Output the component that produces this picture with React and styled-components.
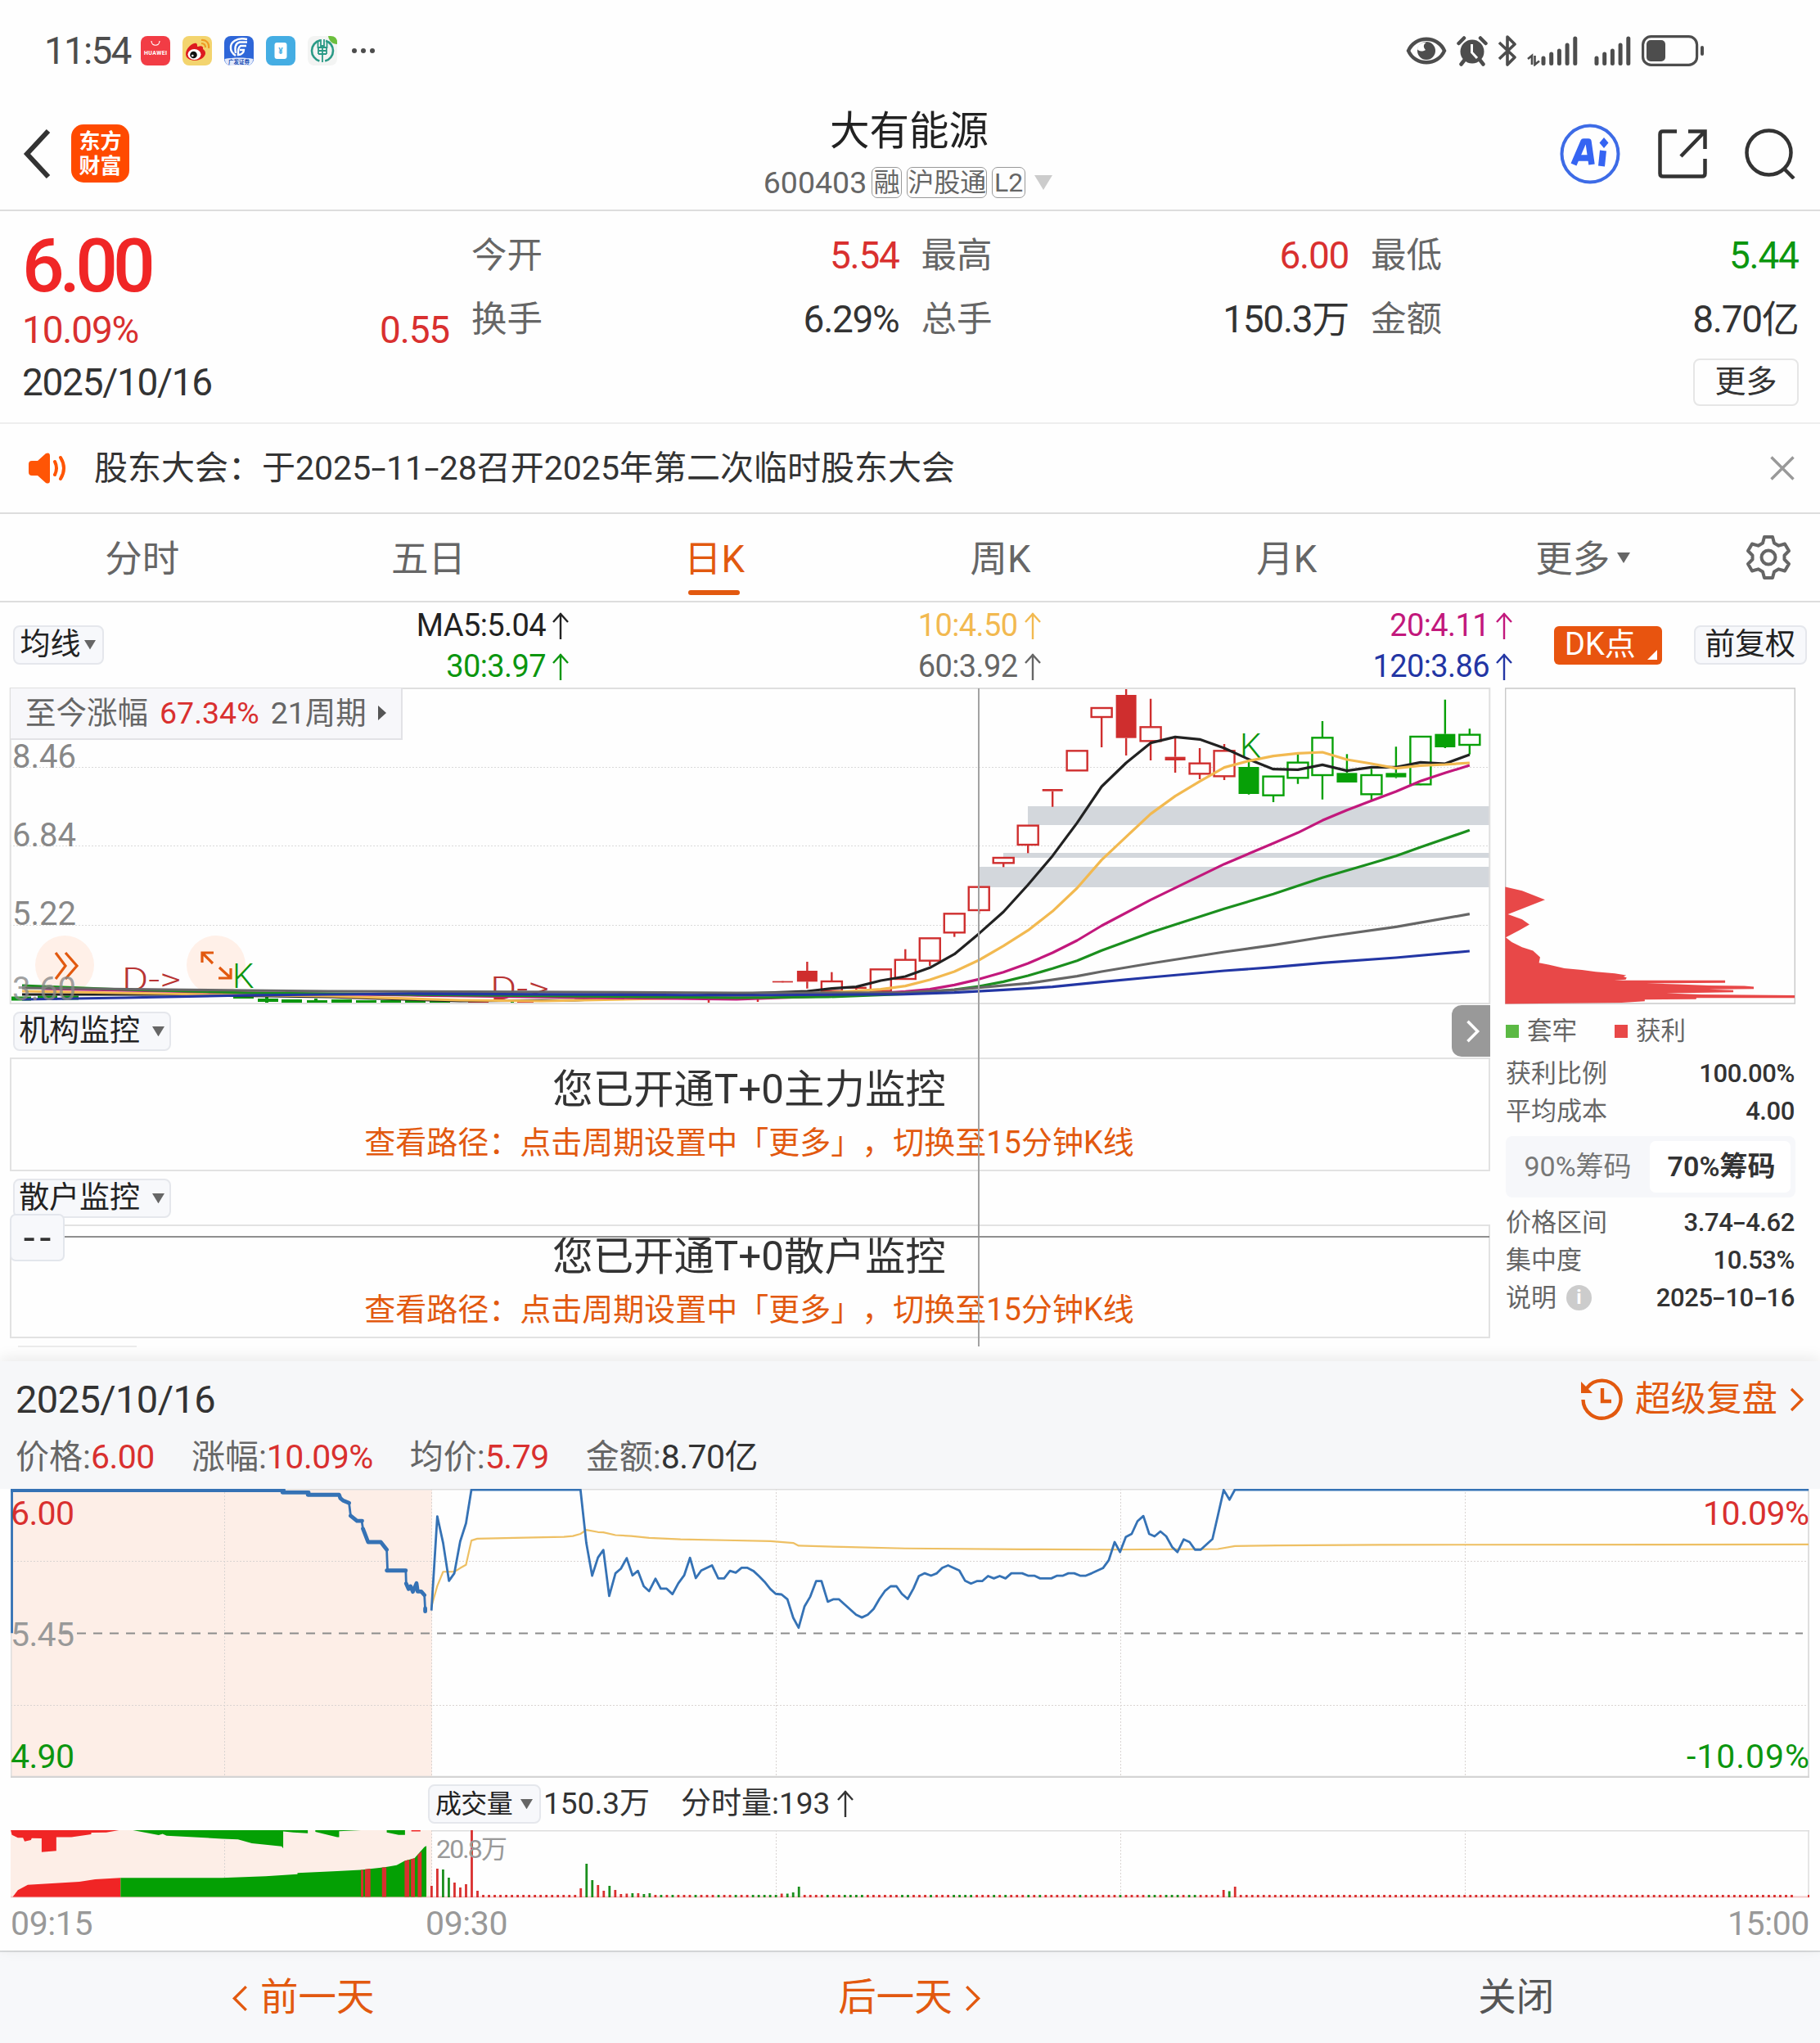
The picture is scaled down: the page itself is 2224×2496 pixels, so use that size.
import React from 'react'
import styled, { createGlobalStyle } from 'styled-components'

const RED = '#d9302f'
const GREEN = '#0c960f'
const ORANGE = '#e2590f'
const BLUE = '#3572b5'

const MA_CELLS = [
    [{ text: 'MA5:5.04', color: '#222222' }, { text: '30:3.97', color: GREEN }],
    [{ text: '10:4.50', color: '#f2b950' }, { text: '60:3.92', color: '#666666' }],
    [{ text: '20:4.11', color: '#c2187c' }, { text: '120:3.86', color: '#2336a4' }],
]

// [color, filled, high, top, bottom, low], in thirds of a pixel
const CANDLES = [
    ['r', 1, 1138, 1136, 1141, 1138],
    ['r', 1, 1065, 1098, 1138, 1163],
    ['r', 0, 1103, 1137, 1172, 1172],
    ['r', 1, 1157, 1157, 1164, 1175],
    ['r', 0, 1093, 1093, 1172, 1172],
    ['r', 0, 1019, 1058, 1128, 1128],
    ['r', 0, 979, 979, 1061, 1080],
    ['r', 0, 889, 889, 958, 974],
    ['r', 0, 791, 791, 876, 890],
    ['r', 0, 684, 684, 703, 718],
    ['r', 0, 566, 566, 636, 667],
    ['r', 1, 436, 432, 440, 497],
    ['r', 0, 292, 292, 364, 364],
    ['r', 0, 135, 135, 168, 279],
    ['r', 1, 63, 87, 245, 309],
    ['r', 0, 101, 205, 256, 327],
    ['r', 1, 243, 314, 327, 372],
    ['r', 0, 282, 338, 376, 396],
    ['r', 0, 267, 292, 385, 399],
    ['g', 1, 330, 351, 450, 452],
    ['g', 0, 386, 386, 455, 480],
    ['g', 0, 305, 335, 391, 413],
    ['g', 0, 183, 244, 381, 470],
    ['g', 1, 304, 373, 408, 408],
    ['g', 0, 358, 381, 451, 475],
    ['g', 1, 277, 373, 389, 392],
    ['g', 0, 238, 240, 415, 418],
    ['g', 1, 104, 230, 279, 282],
    ['g', 0, 211, 233, 270, 305],
]

const candleX = (i) => 944.4 + i * 29.98
const candleY = (v) => (v - 60) / 3

// head: flat stretch in plot pixels; tail: [candle index, value]
const AVERAGES = [
    {
        color: '#222222',
        head: '15,375 190,375 390,378 550,383 690,382 840,376',
        tail: [[1, 1173], [2, 1163], [3, 1157], [4, 1134], [5, 1119], [6, 1087], [7, 1037], [8, 962], [9, 882], [10, 783], [11, 677], [12, 556], [13, 423], [14, 336], [15, 263], [16, 241], [17, 250], [18, 282], [19, 323], [20, 359], [21, 361], [22, 343], [23, 365], [24, 352], [25, 352], [26, 334], [27, 339], [28, 306]],
    },
    {
        color: '#f2b950',
        head: '15,371 190,374 390,377 550,382 650,383 800,380 960,375',
        tail: [[3, 1172], [4, 1166], [5, 1154], [6, 1131], [7, 1101], [8, 1059], [9, 1007], [10, 950], [11, 880], [12, 795], [13, 692], [14, 607], [15, 523], [16, 458], [17, 404], [18, 353], [19, 329], [20, 311], [21, 301], [22, 297], [23, 324], [24, 339], [25, 356], [26, 346], [27, 342], [28, 336]],
    },
    {
        color: '#c2187c',
        head: '40,368 240,372 490,376 888,381 1020,376',
        tail: [[5, 1174], [6, 1166], [7, 1150], [8, 1129], [9, 1103], [10, 1071], [11, 1032], [12, 987], [13, 933], [15, 838], [18, 707], [20, 631], [21, 592], [22, 547], [23, 509], [24, 475], [25, 441], [26, 403], [27, 373], [28, 345]],
    },
    {
        color: '#1b8f1e',
        head: '15,364 140,369 290,373 888,379 1000,378',
        tail: [[5, 1183], [7, 1167], [8, 1155], [9, 1138], [10, 1116], [11, 1090], [12, 1061], [13, 1024], [15, 958], [18, 871], [20, 817], [22, 757], [24, 704], [25, 677], [26, 645], [28, 583]],
    },
    {
        color: '#666666',
        head: '15,367 190,369 390,371 888,373',
        tail: [[5, 1178], [7, 1168], [8, 1160], [10, 1144], [12, 1118], [13, 1101], [15, 1071], [18, 1029], [20, 1004], [22, 975], [25, 937], [28, 890]],
    },
    {
        color: '#2336a4',
        head: '15,381 140,379 290,376 490,374 888,376',
        tail: [[5, 1184], [7, 1178], [9, 1168], [11, 1157], [13, 1139], [15, 1122], [18, 1098], [20, 1085], [22, 1069], [25, 1050], [28, 1026]],
    },
]

const CHIPS = '238,504 300,513 384,534 300,555 248,568 300,580 327,592 290,605 240,622 262,633 300,645 340,653 366,668 362,681 400,686 455,694 520,698 570,702 640,706 682,710 672,713 684,716 680,720 638,722 1045,722 1045,728 755,729 870,731 985,734 1115,735 1150,737 1150,742 985,743 1075,745 1075,750 828,752 960,755 1300,757 1300,763 940,763 938,766 750,767 750,771 665,774 366,776 238,777'

const AUCTION = '30,528 30,56 715,56 715,63 778,63 778,71 855,71 858,82 865,90 880,98 884,140 900,157 912,157 915,183 921,203 928,227 960,227 975,252 977,321 1023,321 1024,364 1030,382 1035,373 1041,391 1050,363 1053,390 1062,390 1070,402 1072,450'
const AUCTION_BOLD = 'M27 56H715M712 63H778M776 71H855L858 82L865 90L880 98M884 140L900 157H913M915 183L921 203L928 227H960L975 252M975 321H1023M1024 364L1030 382L1035 373L1041 391L1050 363L1053 390H1062L1070 402M1072 446V456'

const PRICE = '-315,453 -302,142 -289,230 -276,355 -264,330 -251,225 -238,165 -226,54 17,54 30,230 43,338 56,278 68,253 81,405 95,330 107,315 120,280 133,337 145,322 158,373 170,389 184,348 196,381 209,381 222,399 235,363 248,337 261,279 274,346 286,321 310,304 324,347 337,347 350,322 363,328 376,312 389,312 402,322 415,340 427,358 440,382 452,398 465,400 478,416 491,477 503,510 516,440 529,407 542,356 554,356 568,424 580,416 593,416 631,467 644,476 657,467 670,448 683,415 695,389 708,373 721,373 733,398 746,415 759,380 771,339 784,330 798,338 811,330 823,312 836,304 861,321 874,355 887,364 900,356 912,356 925,339 938,347 951,339 964,347 977,330 1001,330 1014,338 1028,338 1041,347 1066,347 1079,338 1092,338 1104,330 1117,330 1130,338 1143,338 1156,330 1181,313 1194,287 1207,227 1219,260 1232,210 1245,200 1258,158 1271,141 1284,200 1296,208 1309,192 1322,208 1335,243 1347,260 1361,218 1374,227 1386,252 1399,252 1425,217 1437,140 1450,55 1463,87 1475,54 2753,54'
const AVG_PRICE = '-315,440 -302,372 -289,325 -264,325 -251,313 -238,302 -226,222 -213,216 -130,213 -20,210 0,207 17,200 30,187 56,194 68,195 95,204 130,207 170,213 240,218 340,221 440,224 491,230 503,239 600,243 740,248 1000,251 1190,252 1437,250 1475,240 1568,238 1800,236 2753,235'

const BAR_HEIGHTS = {
    0: 14, 1: 35, 2: 34, 3: 24, 4: 18, 5: 12, 6: 16, 7: 82, 8: 8, 26: 11, 27: 41, 28: 21, 29: 15, 30: 8, 31: 14, 32: 9,
    33: 4, 34: 4.5, 35: 5, 36: 5, 37: 4, 38: 5, 61: 4.5, 62: 4.5, 63: 6, 64: 13, 138: 9, 139: 7.5, 140: 13,
}
const GREEN_BARS = [2, 3, 27, 28, 31, 35, 37, 38, 40, 42, 46, 50, 53, 56, 57, 58, 59, 60, 62, 63, 64, 69, 72, 73, 74, 75, 82, 83, 87, 91, 92, 93, 94, 98, 100, 104, 106, 113, 120, 125, 126, 128, 129, 130, 132, 133, 139]
const BARS = Array.from({ length: 241 }, (_, i) => i).filter((i) => i < 238 || i === 240)

const UpArrow = () => (
    <svg width="20" height="33" viewBox="0 0 20 33" fill="none" stroke="currentColor" strokeWidth="2.4">
        <path d="M10 33V1M1 12L10 2L19 12" />
    </svg>
)

const Caret = ({ size = 14 }) => (
    <svg width={size} height={size * 0.82} viewBox="0 0 14 12" preserveAspectRatio="none">
        <path d="M0 0H14L7 12Z" fill="currentColor" />
    </svg>
)

const Chevron = ({ left, width = 18, height = 30, stroke = 3.6 }) => (
    <svg width={width} height={height} viewBox="0 0 18 30" fill="none" stroke="currentColor" strokeWidth={stroke}>
        <path d={left ? 'M16 2L3 15L16 28' : 'M2 2L15 15L2 28'} />
    </svg>
)

const StatusApps = () => (
    <AppIcons>
        <svg width="36" height="36" viewBox="0 0 36 36">
            <rect width="36" height="36" rx="8" fill="#f23c45" />
            <path d="M13 6C13 13 23 13 23 6" fill="none" stroke="#fff" strokeWidth="1.2" />
            <text x="18" y="23" fontSize="7" fontWeight="700" fill="#fff" textAnchor="middle" textLength="28">HUAWEI</text>
        </svg>
        <svg width="36" height="36" viewBox="0 0 36 36">
            <rect width="36" height="36" rx="8" fill="#f3d46e" />
            <path d="M4 22C4 14 14 7 17 9C19 11 17 13 19 13C23 11 26 13 25 16C28 18 29 21 27 24C23 32 4 32 4 22Z" fill="#dd1b1f" />
            <ellipse cx="14.500" cy="22.500" rx="8" ry="6.500" fill="#fff" />
            <circle cx="13.500" cy="23" r="4.300" fill="#111" />
            <circle cx="12.300" cy="24" r="1.300" fill="#fff" />
            <path d="M23 5C29 4 33 9 32 15M23 9C26.500 9 28 11 28 14" fill="none" stroke="#ee9a23" strokeWidth="2.200" />
        </svg>
        <svg width="36" height="36" viewBox="0 0 36 36">
            <rect width="36" height="36" rx="8" fill="#2e66d8" />
            <path d="M0.500 28C10 26 26 26 35.500 28Q34.500 36 28 36H8Q1.500 36 0.500 28Z" fill="#e3eafb" />
            <path d="M28 4C15 1 7 8 8 15C8 19 11 22 14 24M28 7.500H19C13 9 13 16 14 21M27 12H20C17 14 17 17 17 23C21 23 24 20 24 17H19" fill="none" stroke="#fff" strokeWidth="2.400" />
            <text x="18" y="34" fontSize="6.500" fontWeight="700" fill="#2450b4" textAnchor="middle">广发证券</text>
        </svg>
        <svg width="36" height="36" viewBox="0 0 36 36">
            <rect width="36" height="36" rx="8" fill="#44ade3" />
            <rect x="10.500" y="8" width="15" height="20" rx="3" fill="#fff" />
            <text x="18" y="22" fontSize="10" fontWeight="700" fill="#44ade3" textAnchor="middle">¥</text>
        </svg>
        <svg width="36" height="36" viewBox="0 0 36 36">
            <rect width="36" height="36" rx="8" fill="#f3f4f3" />
            <path d="M25 0H28Q36 0 36 8V10C30 10 26 6 25 0Z" fill="#6cbf3d" />
            <circle cx="18" cy="18" r="13" fill="none" stroke="#2a9a86" strokeWidth="2.600" strokeDasharray="34 7" strokeDashoffset="17" />
            <path d="M18 14V32M16 4V12H20V4M12.500 7V14H23.500V7M13 18H23M13 22H23M13 14V22M23 14V22" fill="none" stroke="#2a9a86" strokeWidth="1.800" />
        </svg>
        <svg width="30" height="8" viewBox="0 0 30 8" fill="#4d4d4d">
            <circle cx="4" cy="4" r="3" />
            <circle cx="15" cy="4" r="3" />
            <circle cx="26" cy="4" r="3" />
        </svg>
    </AppIcons>
)

const Signal = () => (
    <svg width="46" height="38" viewBox="0 0 46 38" stroke="#4d4d4d" strokeWidth="5" strokeLinecap="round">
        <path d="M3 28V34.500M12.700 23V34.500M22.400 19V34.500M32.100 12V34.500M41.800 4V34.500" />
    </svg>
)

const StatusIcons = () => (
    <SystemIcons>
        <svg width="50" height="36" viewBox="0 0 50 36">
            <path d="M3 18C11 -1 39 -1 47 18C39 37 11 37 3 18Z" fill="none" stroke="#4d4d4d" strokeWidth="4.500" />
            <circle cx="25" cy="18" r="11" fill="#4d4d4d" />
            <path d="M25 8C21 10 21 14 24 17C19 20 15 18 14 16C15 10 20 7 25 8Z" fill="#fff" />
        </svg>
        <svg width="38" height="38" viewBox="0 0 38 38">
            <circle cx="19" cy="20" r="14.500" fill="#4d4d4d" />
            <path d="M2.500 10L9 3.500M35.500 10L29 3.500M9 31L5.500 35.500M29 31L32.500 35.500" stroke="#4d4d4d" strokeWidth="4.500" strokeLinecap="round" />
            <path d="M18.500 11V21L25 28" fill="none" stroke="#fff" strokeWidth="3" />
        </svg>
        <svg width="24" height="38" viewBox="0 0 24 38">
            <path d="M2 9L21 27L12 36V2L21 11L2 29" fill="none" stroke="#4d4d4d" strokeWidth="3.600" strokeLinejoin="round" />
        </svg>
        <SignalGroup>
            <svg width="17" height="38" viewBox="0 0 17 38">
                <path d="M1 29L6 25V36M9.500 25V36L15 31.500" fill="none" stroke="#4d4d4d" strokeWidth="2.600" />
            </svg>
            <Signal />
        </SignalGroup>
        <Signal />
        <svg width="76" height="38" viewBox="0 0 76 38">
            <rect x="1.600" y="1.600" width="66" height="34.800" rx="10" fill="none" stroke="#4d4d4d" strokeWidth="3.200" />
            <rect x="6" y="6" width="23" height="26" rx="5" fill="#4d4d4d" />
            <rect x="72" y="13" width="4" height="12" rx="2" fill="#4d4d4d" />
        </svg>
    </SystemIcons>
)

const KLine = () => (
    <KLineSvg width="1809" height="387" viewBox="0 0 1809 387">
        <g stroke="#d9d9d9" strokeDasharray="2 2">
            <path d="M0 97.500H1808M0 193.500H1808M0 290.500H1808" />
        </g>
        <g fill="#d3d7dc">
            <rect x="1244" y="145" width="564" height="23" />
            <rect x="1214" y="202" width="594" height="6" />
            <rect x="1184" y="219" width="624" height="25" />
        </g>
        <circle cx="67" cy="339" r="36" fill="#fff0e8" />
        <circle cx="252" cy="339" r="36" fill="#fff0e8" />
        <path d="M56 324L68 340L56 356M68 324L82 340L68 356" fill="none" stroke={ORANGE} strokeWidth="3.200" />
        <path d="M235 336V324H249M236 325L248 337M270 343V355H255M269 354L256 342" fill="none" stroke={ORANGE} strokeWidth="3.200" />
        <g fontSize="42" fontWeight="300">
            <text x="137" y="370" fontSize="38" fill="#b83434" textLength="72" lengthAdjust="spacingAndGlyphs">D-&gt;</text>
            <text x="587" y="381" fontSize="38" fill="#b83434" textLength="72" lengthAdjust="spacingAndGlyphs">D-&gt;</text>
            <text x="272" y="367" fill={GREEN}>K</text>
            <text x="1503" y="86" fill={GREEN}>K</text>
        </g>
        <path d="M2 380H26M34 379H58M64 379H84" stroke="#0c960f" strokeWidth="5" />
        <path d="M273 378H298M303 382H328M332 383H357M363 384H388M393 383H418M423 384H448M453 384H478M483 384H508M513 384H538M314 378V386M374 380V386M614 382V386" stroke="#0c960f" strokeWidth="4" />
        <path d="M560 384H585M620 384H640M854 378V387M914 378V384" stroke={RED} strokeWidth="2.500" />
        {CANDLES.map(([tone, filled, high, top, bottom, low], i) => {
            const color = tone === 'r' ? '#cf2e2e' : '#07a007'
            const x = candleX(i)
            return (
                <g key={i} stroke={color} strokeWidth="2.400">
                    <path d={`M${x} ${candleY(high)}V${candleY(top)}M${x} ${candleY(bottom)}V${candleY(low)}`} />
                    {filled
                        ? <rect x={x - 12.5} y={candleY(top)} width="25" height={(bottom - top) / 3} fill={color} stroke="none" />
                        : <rect x={x - 12.5} y={candleY(top)} width="25" height={(bottom - top) / 3} fill="#fff" />}
                </g>
            )
        })}
        {AVERAGES.map(({ color, head, tail }) => (
            <polyline
                key={color}
                points={`${head} ${tail.map(([i, v]) => `${candleX(i)},${candleY(v)}`).join(' ')}`}
                fill="none"
                stroke={color}
                strokeWidth="3.200"
                strokeLinejoin="round"
            />
        ))}
        <g fontSize="40" fill="#888888">
            <text x="3" y="98">8.46</text>
            <text x="3" y="194">6.84</text>
            <text x="3" y="290">5.22</text>
            <text x="3" y="382" fillOpacity="0.8">3.60</text>
        </g>
        <rect x="0.750" y="1" width="1807.500" height="385" fill="none" stroke="#dfdfdf" strokeWidth="2" />
    </KLineSvg>
)

const MinuteChart = () => (
    <svg width="2198" height="353" viewBox="0 0 2198 353">
        <rect width="515" height="352" fill="#fdeee7" />
        <g stroke="#d9d4d2" strokeDasharray="2 2">
            <path d="M0 88.500H2197M0 264.500H2197M261.500 0V352M514.500 0V352M935.500 0V352M1356.500 0V352M1777.500 0V352" />
        </g>
        <path d="M60 176.500H2190" stroke="#8c8c8c" strokeWidth="2" strokeDasharray="11 9" strokeDashoffset="-1" />
        <path d="M0.500 0V352M0 0.500H2198M2197 0V352" stroke="#dedede" strokeWidth="2" />
        <path d="M0 352H2198" stroke="#d4d4d4" strokeWidth="2.500" />
        <g fill="none" stroke={BLUE} strokeLinejoin="round" transform="translate(-13 -19) scale(0.4847 0.37)">
            <polyline points={AUCTION} strokeWidth="2.800" vectorEffect="non-scaling-stroke" />
            <path d={AUCTION_BOLD} strokeWidth="4.800" strokeLinecap="round" vectorEffect="non-scaling-stroke" />
        </g>
        <g fill="none" strokeLinejoin="round" transform="translate(687 -19) scale(0.5485 0.37)">
            <polyline points={AVG_PRICE} stroke="#eec064" strokeWidth="2.200" vectorEffect="non-scaling-stroke" />
            <polyline points={PRICE} stroke={BLUE} strokeWidth="2.800" vectorEffect="non-scaling-stroke" />
        </g>
        <g fontSize="41">
            <text x="0" y="44" fill={RED} textLength="78">6.00</text>
            <text x="0" y="192" fill="#999999" textLength="78">5.45</text>
            <text x="0" y="341" fill={GREEN} textLength="78">4.90</text>
            <text x="2198" y="44" fill={RED} textAnchor="end" textLength="130">10.09%</text>
            <text x="2198" y="341" fill={GREEN} textAnchor="end" textLength="150">-10.09%</text>
        </g>
    </svg>
)

const VolumeChart = () => (
    <svg width="2198" height="83" viewBox="0 0 2198 83">
        <rect width="515" height="82" fill="#fdeee7" />
        <path d="M261.500 0V82M514.500 0V82M935.500 0V82M1356.500 0V82M1777.500 0V82" stroke="#d9d4d2" strokeDasharray="2 2" />
        <path d="M515 0.750H2198M2197 0V82" stroke="#dedede" strokeWidth="1.500" />
        <path d="M0 81.500H2198" stroke="#f3caca" strokeWidth="2" />
        <g transform="translate(-13 -436.500) scale(0.4847 0.37)">
            <path d="M27 1180L30 1195L45 1205H58L62 1217L78 1212L80 1206L105 1207V1252L142 1248V1203H180L230 1193V1188L268 1187L300 1180ZM1037 1180H1060V1184H1037Z" fill="#f02525" />
            <path d="M335 1180L400 1196L410 1192L420 1198L560 1208L600 1210L635 1223L710 1233L714 1240V1184L740 1187L776 1190V1180ZM795 1180V1185L850 1203H855V1183L910 1180ZM975 1180V1187L1005 1195H1021V1180Z" fill="#04a004" />
            <path d="M32 1400L45 1378L70 1360L200 1350L240 1342L304 1337V1400Z" fill="#f02525" />
            <path d="M304 1337H560L670 1332L750 1325V1321L850 1315L910 1311L970 1302L1000 1295L1020 1281L1045 1272L1060 1250L1070 1235L1075 1232V1400H304Z" fill="#04a004" />
            <path d="M910 1400V1311H916V1400ZM920 1400V1309L934 1307V1400ZM963 1400V1303H974V1400ZM1020 1400V1281L1032 1277V1400ZM1036 1400V1275L1046 1272V1400ZM1053 1400V1261L1063 1250V1400Z" fill="#d9302f" />
        </g>
        {BARS.map((i) => {
            const h = BAR_HEIGHTS[i] || 3
            return <rect key={i} x={513 + i * 7.013} y={82 - h} width="2.8" height={h} fill={GREEN_BARS.includes(i) ? '#1b8f1e' : RED} />
        })}
        <text x="520" y="34" fontSize="32" fill="#999999" textLength="87">20.8万</text>
    </svg>
)

const Stat = ({ label, value, tone }) => (
    <StatCell>
        <StatLabel>{label}</StatLabel>
        <StatValue $color={tone}>{value}</StatValue>
    </StatCell>
)

const Monitor = ({ name, title }) => (
    <>
        <MonitorHead>
            <Pill $width={193} $gap={15}>{name}<Caret size={15} /></Pill>
        </MonitorHead>
        <MonitorBox>
            <MonitorTitle>{title}</MonitorTitle>
            <MonitorHint>查看路径：点击周期设置中「更多」，切换至15分钟K线</MonitorHint>
        </MonitorBox>
    </>
)

const App = () => {
    return (
        <Page>
            <GlobalStyle />
            <StatusBar>
                <Clock>11:54</Clock>
                <StatusApps />
                <StatusIcons />
            </StatusBar>

            <Header>
                <HeaderSide>
                    <svg width="34" height="60" viewBox="0 0 34 60" fill="none" stroke="#333" strokeWidth="6">
                        <path d="M31 2L5 30L31 58" />
                    </svg>
                    <Brand><span>东方</span><span>财富</span></Brand>
                </HeaderSide>
                <Heading>
                    <StockName>大有能源</StockName>
                    <StockCode>
                        600403
                        <Tag $width={37}>融</Tag>
                        <Tag $width={98}>沪股通</Tag>
                        <Tag $width={41}>L2</Tag>
                        <CodeCaret><Caret size={22} /></CodeCaret>
                    </StockCode>
                </Heading>
                <HeaderActions>
                    <svg width="74" height="74" viewBox="0 0 74 74">
                        <circle cx="37" cy="37" r="34.500" fill="none" stroke="#3d6be6" strokeWidth="4" />
                        <path d="M17 50L29 22H35L39 50M22 42H37" fill="none" stroke="#3564f2" strokeWidth="7.500" strokeLinejoin="round" />
                        <path d="M53 33L51 52" stroke="#3564f2" strokeWidth="8" />
                        <path d="M54 17L59.500 23.500L54 30L48.500 23.500Z" fill="#3564f2" />
                    </svg>
                    <svg width="60" height="60" viewBox="0 0 60 60" fill="none" stroke="#333" strokeWidth="4.500">
                        <path d="M23 2.500H6Q2.500 2.500 2.500 6V54Q2.500 57.500 6 57.500H54Q57.500 57.500 57.500 54V36M37 2.500H57.500V24M57 3L28 33" />
                    </svg>
                    <svg width="62" height="62" viewBox="0 0 62 62" fill="none" stroke="#333" strokeWidth="4.500">
                        <circle cx="29.500" cy="29.500" r="27" />
                        <path d="M47 48L60 61" />
                    </svg>
                </HeaderActions>
            </Header>

            <Quote>
                <QuoteMain>
                    <LastPrice>6.00</LastPrice>
                    <Change><span>10.09%</span><span>0.55</span></Change>
                </QuoteMain>
                <Stats>
                    <Stat label="今开" value="5.54" tone={RED} />
                    <Stat label="最高" value="6.00" tone={RED} />
                    <Stat label="最低" value="5.44" tone={GREEN} />
                    <Stat label="换手" value="6.29%" />
                    <Stat label="总手" value="150.3万" />
                    <Stat label="金额" value="8.70亿" />
                </Stats>
                <QuoteFoot>
                    <span>2025/10/16</span>
                    <MoreButton>更多</MoreButton>
                </QuoteFoot>
            </Quote>

            <News>
                <svg width="48" height="38" viewBox="0 0 48 38">
                    <path d="M5 10H12L22 1Q27 -1 27 4V34Q27 39 22 37L12 28H5Q1 28 1 24V14Q1 10 5 10Z" fill="#ff5505" />
                    <path d="M33 11Q37 19 33 27M40 6Q48 19 40 32" fill="none" stroke="#ff5505" strokeWidth="4" strokeLinecap="round" />
                </svg>
                <NewsText>股东大会：于2025<Dash>-</Dash>11<Dash>-</Dash>28召开2025年第二次临时股东大会</NewsText>
                <svg width="30" height="30" viewBox="0 0 30 30" stroke="#999" strokeWidth="3.400">
                    <path d="M1.500 1.500L28.500 28.500M28.500 1.500L1.500 28.500" />
                </svg>
            </News>

            <Tabs>
                <Tab>分时</Tab>
                <Tab>五日</Tab>
                <Tab $active>日K</Tab>
                <Tab>周K</Tab>
                <Tab>月K</Tab>
                <Tab>更多<TabCaret><Caret size={16} /></TabCaret></Tab>
                <Settings>
                    <svg width="56" height="56" viewBox="0 0 56 56" fill="none" stroke="#666" strokeWidth="4" strokeLinejoin="round">
                        <path d="M23 3H33L35 10.500L40.500 13.700L48 11.500L53 20L47.500 25.500V30.500L53 36L48 44.500L40.500 42.300L35 45.500L33 53H23L21 45.500L15.500 42.300L8 44.500L3 36L8.500 30.500V25.500L3 20L8 11.500L15.500 13.700L21 10.500Z" />
                        <circle cx="28" cy="28" r="8.500" />
                    </svg>
                </Settings>
            </Tabs>

            <Indicators>
                <Pill $width={111} $gap={5}>均线<Caret size={14} /></Pill>
                <MaGrid>
                    {MA_CELLS.map((cells) => (
                        <MaColumn key={cells[0].text}>
                            {cells.map(({ text, color }) => (
                                <MaValue key={text} $color={color}>{text}<UpArrow /></MaValue>
                            ))}
                        </MaColumn>
                    ))}
                </MaGrid>
                <DkButton>DK点</DkButton>
                <Pill $width={138} $gap={0}>前复权</Pill>
            </Indicators>

            <Charts>
                <ChartColumn>
                    <KLine />
                    <GainTag>
                        至今涨幅 <b>67.34%</b> 21周期
                        <svg width="10" height="18" viewBox="0 0 10 18"><path d="M0 0L10 9L0 18Z" fill="#555" /></svg>
                    </GainTag>
                    <Monitor name="机构监控" title="您已开通T+0主力监控" />
                    <Monitor name="散户监控" title="您已开通T+0散户监控" />
                    <NextPill />
                    <Expand><Chevron width={18} height={28} stroke={3.8} /></Expand>
                    <CrossV />
                    <CrossH />
                    <CrossLabel>--</CrossLabel>
                </ChartColumn>
                <ChipColumn>
                    <svg width="355" height="387" viewBox="237 39 1066 739" preserveAspectRatio="none">
                        <rect x="239" y="41" width="1062" height="735" fill="none" stroke="#c9c9c9" strokeWidth="1.500" vectorEffect="non-scaling-stroke" />
                        <polygon points={CHIPS} fill="#e84848" />
                    </svg>
                    <Legend>
                        <LegendItem $color="#5bb944">套牢</LegendItem>
                        <LegendItem $color="#e84848">获利</LegendItem>
                    </Legend>
                    <ChipRow>获利比例<b>100.00%</b></ChipRow>
                    <ChipRow>平均成本<b>4.00</b></ChipRow>
                    <ChipTabs>
                        <ChipTab>90%筹码</ChipTab>
                        <ChipTab $active>70%筹码</ChipTab>
                    </ChipTabs>
                    <ChipRow>价格区间<b>3.74<Dash>-</Dash>4.62</b></ChipRow>
                    <ChipRow>集中度<b>10.53%</b></ChipRow>
                    <ChipRow>
                        <ChipNote>说明<Info>i</Info></ChipNote>
                        <b>2025<Dash>-</Dash>10<Dash>-</Dash>16</b>
                    </ChipRow>
                </ChipColumn>
            </Charts>

            <Replay>
                <ReplayHead>
                    <ReplayTop>
                        <span>2025/10/16</span>
                        <ReplayLink>
                            <svg width="52" height="52" viewBox="0 0 52 52" fill="none" stroke={ORANGE} strokeWidth="4.400">
                                <path d="M3.500 26A23 23 0 1 0 8 12M27 12V28H38" />
                                <path d="M1 4V18H15L10 13Z" fill={ORANGE} stroke="none" />
                            </svg>
                            超级复盘
                            <Chevron stroke={3.2} />
                        </ReplayLink>
                    </ReplayTop>
                    <ReplayStats>
                        <div>价格:<b>6.00</b></div>
                        <div>涨幅:<b>10.09%</b></div>
                        <div>均价:<b>5.79</b></div>
                        <div>金额:<i>8.70亿</i></div>
                    </ReplayStats>
                </ReplayHead>
                <MinuteChart />
                <VolumeHead>
                    <Pill $width={138} $gap={10} $small>成交量<Caret size={15} /></Pill>
                    <span>150.3万</span>
                    <VolumeNow>分时量:193<UpArrow /></VolumeNow>
                </VolumeHead>
                <VolumeChart />
                <TimeAxis><span>09:15</span><span>09:30</span><span>15:00</span></TimeAxis>
            </Replay>

            <BottomNav>
                <NavItem $accent><Chevron left width={20} height={35} stroke={3} />前一天</NavItem>
                <NavItem $accent>后一天<Chevron width={20} height={35} stroke={3} /></NavItem>
                <NavItem>关闭</NavItem>
            </BottomNav>
        </Page>
    )
}

const GlobalStyle = createGlobalStyle`
    body {
        margin: 0;
        background: #fefefe;
    }
    * {
        box-sizing: border-box;
    }
    b, i {
        font-weight: 400;
        font-style: normal;
    }
    svg {
        display: block;
        flex-shrink: 0;
    }
`

const Page = styled.div`
    width: 2224px;
    height: 2496px;
    display: flex;
    flex-direction: column;
    overflow: hidden;
    background: #fefefe;
    color: #333333;
    font-family: Roboto, "Noto Sans CJK SC", sans-serif;
    line-height: 1.2;
    white-space: nowrap;
    text-spacing-trim: space-all;
`

// Roboto's hyphen is short, stretch it inside dates and ranges
const Dash = styled.span`
    display: inline-block;
    margin: 0 0.09em;
    transform: scaleX(1.6);
`

const StatusBar = styled.div`
    height: 124px;
    padding-left: 54px;
    display: flex;
    align-items: center;
`

const Clock = styled.div`
    width: 118px;
    padding-top: 2px;
    font-size: 46px;
    letter-spacing: -1.8px;
    color: #4d4d4d;
`

const AppIcons = styled.div`
    display: flex;
    align-items: center;
    gap: 15px;
    svg:last-child {
        margin-left: 2px;
    }
`

const SystemIcons = styled.div`
    display: flex;
    align-items: center;
    gap: 12px;
    margin-left: auto;
    padding-right: 142px;
`

const SignalGroup = styled.div`
    display: flex;
    margin-right: 7px;
`

const Header = styled.header`
    height: 134px;
    padding: 0 30px 0 28px;
    display: grid;
    grid-template-columns: 1fr auto 1fr;
    border-bottom: 2px solid #dddddd;
`

const HeaderSide = styled.div`
    display: flex;
    align-items: center;
    gap: 25px;
    padding-bottom: 5px;
`

const Brand = styled.div`
    width: 71px;
    height: 71px;
    border-radius: 15px;
    background: #ff4a00;
    color: #ffffff;
    display: flex;
    flex-direction: column;
    align-items: center;
    justify-content: center;
    font-size: 26px;
    font-weight: 700;
    line-height: 30px;
`

const Heading = styled.div`
    display: flex;
    flex-direction: column;
    align-items: center;
`

const StockName = styled.div`
    margin-top: 5px;
    font-size: 48.5px;
    line-height: 63px;
    color: #222222;
`

const StockCode = styled.div`
    height: 62px;
    display: flex;
    align-items: center;
    gap: 6px;
    padding-right: 3px;
    font-size: 37.5px;
    color: #666666;
`

const Tag = styled.span`
    width: ${(p) => p.$width}px;
    height: 38px;
    display: flex;
    align-items: center;
    justify-content: center;
    border: 1.5px solid #999999;
    border-radius: 7px;
    font-size: 32px;
`

const CodeCaret = styled.span`
    margin-left: 5px;
    color: #cccccc;
`

const HeaderActions = styled.div`
    display: flex;
    align-items: center;
    justify-content: flex-end;
    gap: 46px;
    padding-bottom: 5px;
`

const Quote = styled.section`
    height: 260px;
    padding: 0 26px 0 27px;
    display: grid;
    grid-template-columns: 522px 1fr;
    grid-template-rows: 176px 1fr;
    border-bottom: 2px solid #eeeeee;
`

const QuoteMain = styled.div`
    display: flex;
    flex-direction: column;
    color: ${RED};
`

const LastPrice = styled.div`
    margin-top: 14px;
    font-size: 91px;
    font-weight: 500;
    line-height: 106px;
    letter-spacing: -5.9px;
    color: #f02626;
`

const Change = styled.div`
    display: flex;
    justify-content: space-between;
    font-size: 46px;
    line-height: 50px;
    letter-spacing: -1.2px;
`

const Stats = styled.div`
    display: grid;
    grid-template-columns: repeat(3, 549.5px);
    grid-auto-rows: 78px;
    padding-top: 16px;
`

const StatCell = styled.div`
    display: flex;
    align-items: center;
    justify-content: space-between;
    padding-left: 27px;
`

const StatLabel = styled.span`
    font-size: 43.5px;
    color: #666666;
`

const StatValue = styled.span`
    font-size: 46px;
    letter-spacing: -1.3px;
    color: ${(p) => p.$color || '#333333'};
`

const QuoteFoot = styled.div`
    grid-column: 1 / -1;
    height: 66px;
    display: flex;
    align-items: center;
    justify-content: space-between;
    font-size: 46px;
    letter-spacing: -1.3px;
    > span {
        padding-top: 2px;
    }
`

const MoreButton = styled.div`
    width: 129px;
    height: 58px;
    display: flex;
    align-items: center;
    justify-content: center;
    border: 2px solid #e6e6e6;
    border-radius: 8px;
    font-size: 38px;
    letter-spacing: 0;
`

const News = styled.section`
    height: 110px;
    padding: 0 31px 0 34px;
    display: flex;
    align-items: center;
    border-bottom: 2px solid #dddddd;
`

const NewsText = styled.div`
    flex: 1;
    padding: 2px 0 0 33px;
    font-size: 41px;
`

const Tabs = styled.nav`
    height: 108px;
    display: grid;
    grid-template-columns: repeat(6, 349.6px) 1fr;
    border-bottom: 2px solid #dddddd;
`

const Tab = styled.div`
    position: relative;
    display: flex;
    align-items: center;
    justify-content: center;
    padding: 6px 2px 0 0;
    font-size: 45.5px;
    color: ${(p) => (p.$active ? ORANGE : '#666666')};
    &::after {
        content: '';
        display: ${(p) => (p.$active ? 'block' : 'none')};
        position: absolute;
        bottom: 7px;
        width: 63px;
        height: 6px;
        border-radius: 3px;
        background: ${ORANGE};
    }
`

const TabCaret = styled.span`
    width: 0;
    margin-bottom: 4px;
    svg {
        margin-left: 9px;
    }
`

const Settings = styled.div`
    display: flex;
    align-items: center;
    justify-content: center;
`

const Indicators = styled.section`
    height: 104px;
    padding: 0 16px;
    display: flex;
    align-items: center;
`

const Pill = styled.div`
    width: ${(p) => p.$width}px;
    height: 48px;
    display: flex;
    align-items: center;
    justify-content: center;
    gap: ${(p) => p.$gap}px;
    padding-right: 1px;
    border: 2px solid #e5e7ec;
    border-radius: 8px;
    background: #f7f8fb;
    font-size: ${(p) => (p.$small ? 32 : 37)}px;
    letter-spacing: ${(p) => (p.$small ? -0.7 : -0.1)}px;
    color: #222222;
    svg {
        color: #666666;
    }
`

const MaGrid = styled.div`
    flex: 1;
    display: grid;
    grid-template-columns: 568px 576.5px 576.5px;
    align-self: stretch;
    padding-top: 4px;
`

const MaColumn = styled.div`
    display: flex;
    flex-direction: column;
    align-items: flex-end;
`

const MaValue = styled.div`
    height: 50px;
    display: flex;
    align-items: center;
    gap: 8px;
    font-size: 38px;
    letter-spacing: -0.6px;
    color: ${(p) => p.$color};
    svg {
        margin-bottom: 2px;
    }
`

const DkButton = styled.div`
    position: relative;
    width: 132px;
    height: 47px;
    margin-right: 39px;
    padding-left: 13px;
    display: flex;
    align-items: center;
    border-radius: 6px;
    background: #e8540f;
    font-size: 38px;
    color: #ffffff;
    &::after {
        content: '';
        position: absolute;
        right: 6px;
        bottom: 6px;
        border-left: 12px solid transparent;
        border-bottom: 12px solid #ffffff;
    }
`

const Charts = styled.section`
    height: 823px;
    padding: 0 30px 0 12px;
    display: flex;
    justify-content: space-between;
`

const ChartColumn = styled.div`
    position: relative;
    width: 1809px;
`

const KLineSvg = styled.svg`
    overflow: visible;
    font-family: Roboto, "Noto Sans CJK SC", sans-serif;
`

const GainTag = styled.div`
    position: absolute;
    top: 1px;
    left: 1px;
    width: 479px;
    height: 63px;
    padding: 0 0 1px 18px;
    display: flex;
    align-items: center;
    gap: 14px;
    border-right: 2px solid #e2e2e6;
    border-bottom: 2px solid #e2e2e6;
    background: #f7f7fa;
    font-size: 37.5px;
    color: #666666;
    b {
        color: ${RED};
    }
`

const MonitorHead = styled.div`
    height: 65px;
    padding: 9px 0 0 4px;
`

const MonitorBox = styled.div`
    height: 139px;
    display: flex;
    flex-direction: column;
    align-items: center;
    padding-right: 2px;
    border: 2px solid #e2e2e2;
`

const MonitorTitle = styled.div`
    margin-top: 5px;
    font-size: 49.4px;
    line-height: 64px;
`

const MonitorHint = styled.div`
    font-size: 38px;
    line-height: 67px;
    color: ${ORANGE};
`

const NextPill = styled.div`
    width: 145px;
    margin: 9px 0 0 10px;
    border-top: 2px solid #ececec;
`

const Expand = styled.div`
    position: absolute;
    top: 388px;
    right: 0;
    width: 47px;
    height: 63px;
    padding-left: 4px;
    display: flex;
    align-items: center;
    justify-content: center;
    border-radius: 12px 0 0 12px;
    background: #999999;
    color: #ffffff;
`

const CrossV = styled.div`
    position: absolute;
    top: 1px;
    left: 1183px;
    width: 2px;
    height: 804px;
    background: #a3a3a3;
`

const CrossH = styled.div`
    position: absolute;
    top: 670px;
    left: 0;
    width: 1808px;
    height: 2px;
    background: #8f8f8f;
`

const CrossLabel = styled.div`
    position: absolute;
    top: 643px;
    left: 0;
    width: 67px;
    height: 58px;
    padding-left: 6px;
    display: flex;
    align-items: center;
    justify-content: center;
    border: 2px solid #e3e6ec;
    border-radius: 7px;
    background: #f7f8fb;
    font-size: 50px;
    letter-spacing: 6px;
`

const ChipColumn = styled.aside`
    width: 355px;
    display: flex;
    flex-direction: column;
`

const Legend = styled.div`
    height: 61px;
    display: flex;
    align-items: center;
    gap: 46px;
    padding: 5px 0 0 1px;
`

const LegendItem = styled.div`
    display: flex;
    align-items: center;
    gap: 10px;
    font-size: 30.5px;
    color: #666666;
    &::before {
        content: '';
        width: 16px;
        height: 16px;
        background: ${(p) => p.$color};
    }
`

const ChipRow = styled.div`
    height: 46px;
    display: flex;
    align-items: center;
    justify-content: space-between;
    padding: 1px 1px 0 1px;
    font-size: 31px;
    color: #666666;
    b {
        font-weight: 500;
        letter-spacing: -0.4px;
        color: #333333;
    }
`

const ChipNote = styled.span`
    display: flex;
    align-items: center;
    gap: 12px;
`

const Info = styled.em`
    width: 31px;
    height: 31px;
    border-radius: 50%;
    background: #cccccc;
    color: #ffffff;
    font-size: 24px;
    font-style: normal;
    font-weight: 700;
    line-height: 31px;
    text-align: center;
`

const ChipTabs = styled.div`
    height: 75px;
    margin: 8px 0 7px 1px;
    padding: 6px;
    display: grid;
    grid-template-columns: 1fr 172px;
    border-radius: 8px;
    background: #f6f7fa;
`

const ChipTab = styled.div`
    display: flex;
    align-items: center;
    justify-content: center;
    padding: ${(p) => (p.$active ? '0 0 0 3px' : '0 6px 0 0')};
    border-radius: 7px;
    background: ${(p) => (p.$active ? '#ffffff' : 'transparent')};
    font-size: 34px;
    font-weight: ${(p) => (p.$active ? 600 : 400)};
    color: ${(p) => (p.$active ? '#333333' : '#777777')};
`

const Replay = styled.section`
    position: relative;
    height: 720px;
    display: flex;
    flex-direction: column;
    background: #fefefe;
    box-shadow: 0 -3px 18px rgba(0, 0, 0, 0.09);
    > svg {
        margin-left: 13px;
        font-family: Roboto, "Noto Sans CJK SC", sans-serif;
    }
`

const ReplayHead = styled.div`
    height: 156px;
    padding: 13px 19px 0 19px;
    background: #f6f7f9;
`

const ReplayTop = styled.div`
    height: 68px;
    display: flex;
    align-items: center;
    justify-content: space-between;
    font-size: 47px;
    letter-spacing: -0.6px;
`

const ReplayLink = styled.div`
    display: flex;
    align-items: center;
    gap: 15px;
    font-size: 43.5px;
    letter-spacing: 0;
    color: ${ORANGE};
`

const ReplayStats = styled.div`
    height: 73px;
    display: flex;
    align-items: center;
    gap: 45px;
    font-size: 41px;
    color: #666666;
    b {
        color: ${RED};
        letter-spacing: -0.5px;
    }
    i {
        color: #333333;
        letter-spacing: -0.5px;
    }
`

const VolumeHead = styled.div`
    height: 64px;
    padding-left: 523px;
    display: flex;
    align-items: center;
    font-size: 37px;
    > span {
        padding-left: 3px;
    }
`

const VolumeNow = styled.div`
    display: flex;
    align-items: center;
    gap: 9px;
    padding-left: 38px;
`

const TimeAxis = styled.div`
    height: 64px;
    padding: 0 13px;
    display: grid;
    grid-template-columns: 507px 1fr auto;
    align-items: center;
    font-size: 41px;
    letter-spacing: -0.4px;
    color: #999999;
`

const BottomNav = styled.nav`
    flex: 1;
    display: grid;
    grid-template-columns: repeat(3, 1fr);
    border-top: 2px solid #d9dbdd;
    background: #f7f8fa;
`

const NavItem = styled.div`
    display: flex;
    align-items: center;
    justify-content: center;
    gap: 15px;
    padding: 1px 1px 0 0;
    font-size: 46.5px;
    color: ${(p) => (p.$accent ? ORANGE : '#555555')};
`

export default App
